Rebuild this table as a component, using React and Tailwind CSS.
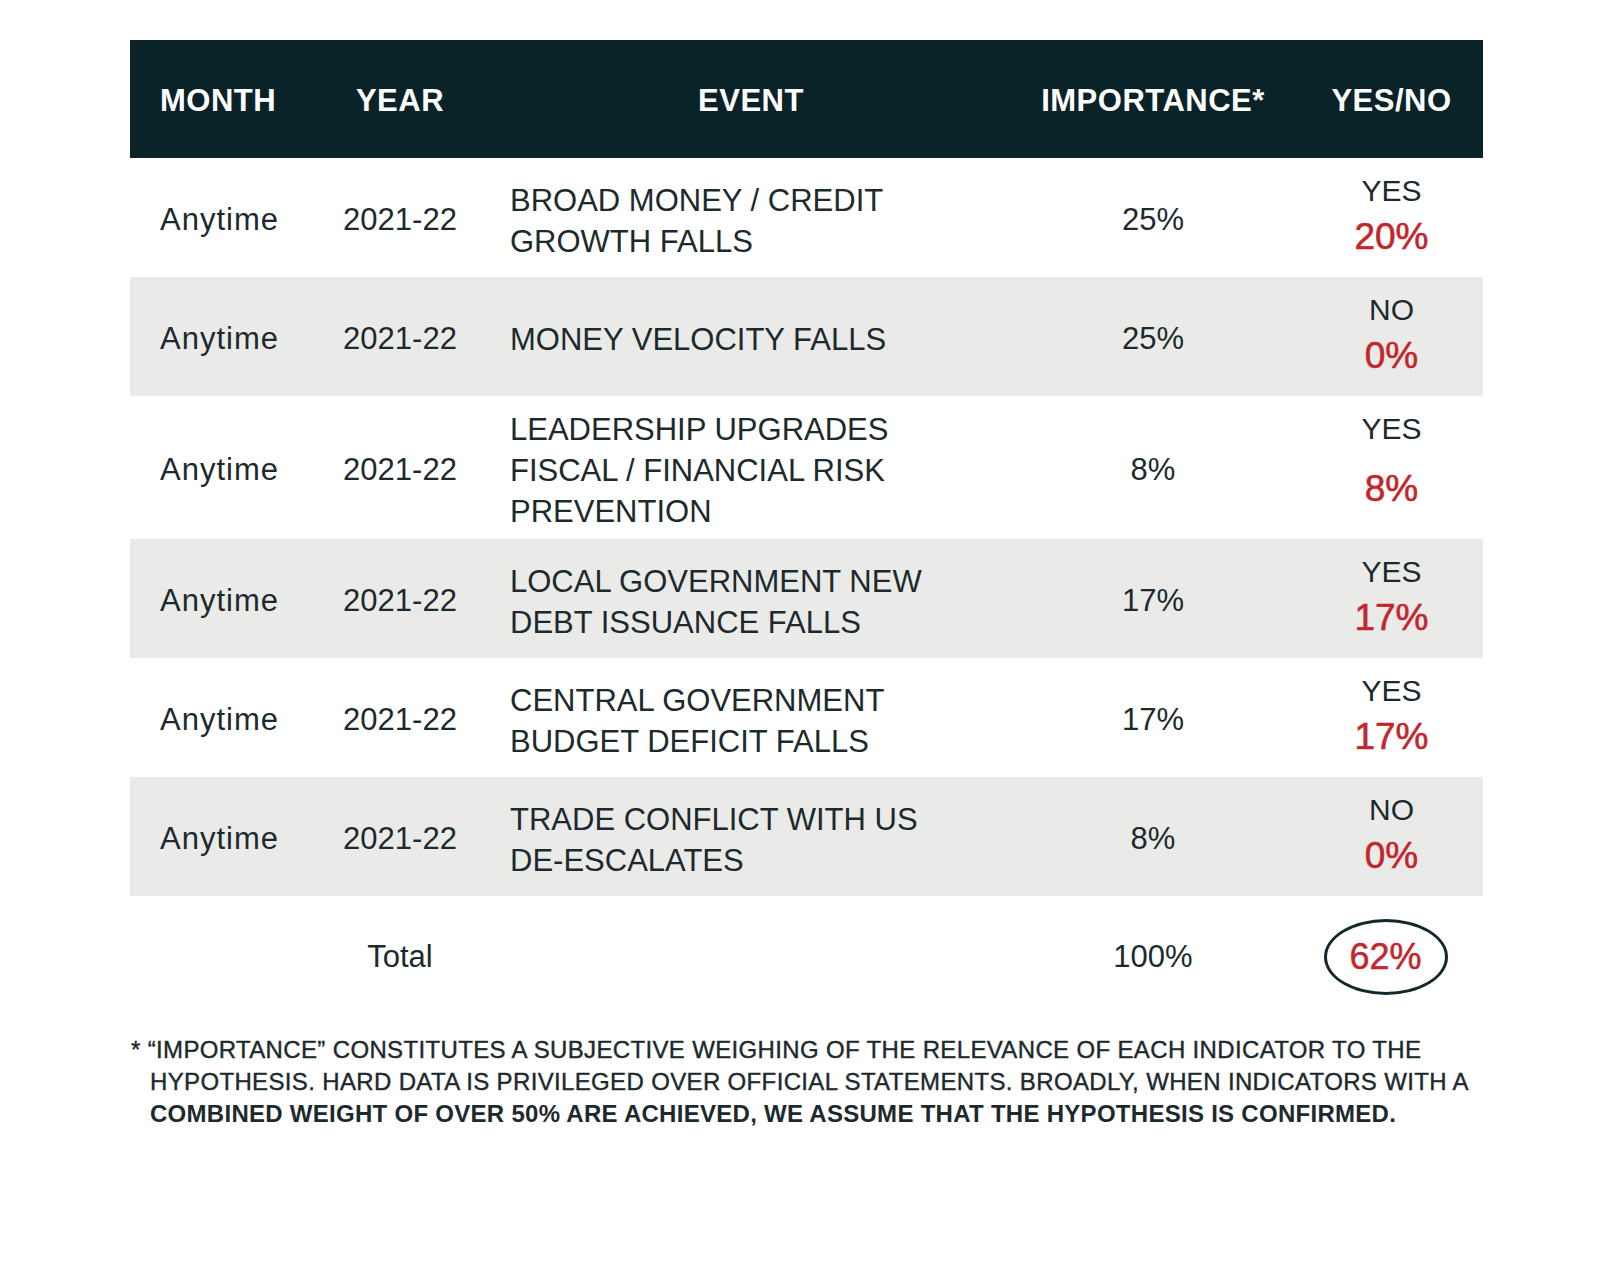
import React from "react";

const rows = [
  { event: ["BROAD MONEY / CREDIT", "GROWTH FALLS"], imp: "25%", yn: "YES", val: "20%" },
  { event: ["MONEY VELOCITY FALLS"], imp: "25%", yn: "NO", val: "0%" },
  { event: ["LEADERSHIP UPGRADES", "FISCAL / FINANCIAL RISK", "PREVENTION"], imp: "8%", yn: "YES", val: "8%", tall: true },
  { event: ["LOCAL GOVERNMENT NEW", "DEBT ISSUANCE FALLS"], imp: "17%", yn: "YES", val: "17%" },
  { event: ["CENTRAL GOVERNMENT", "BUDGET DEFICIT FALLS"], imp: "17%", yn: "YES", val: "17%" },
  { event: ["TRADE CONFLICT WITH US", "DE-ESCALATES"], imp: "8%", yn: "NO", val: "0%" },
];

export default function App() {
  return (
    <div
      className="w-[1600px] h-[1274px] bg-white text-[#1d2a2d] overflow-hidden"
      style={{ fontFamily: '"Liberation Sans", Arial, sans-serif' }}
    >
      <div className="ml-[130px] mt-[40px] w-[1353px]">
        {/* header */}
        <div className="grid grid-cols-[200px_140px_536px_294px_183px] h-[118px] items-center pt-[4px] bg-[#0a2329] text-white font-bold text-[31px] tracking-[0.5px]">
          <div className="pl-[30px]">MONTH</div>
          <div className="text-center">YEAR</div>
          <div className="pl-[40px] pr-[14px] text-center">EVENT</div>
          <div className="text-center">IMPORTANCE*</div>
          <div className="text-center">YES/NO</div>
        </div>
        {rows.map((r, i) => (
          <div
            key={i}
            className={`grid grid-cols-[200px_140px_536px_294px_183px] min-h-[119px] text-[31px] ${
              i % 2 === 1 ? "bg-[#eaebe9]" : "bg-white"
            }`}
          >
            <div className="pl-[30px] pt-[6px] flex items-center tracking-[1px]">Anytime</div>
            <div className="pt-[6px] flex items-center justify-center">2021-22</div>
            <div className="pl-[40px] pt-[13px] pb-[7px] flex flex-col justify-center leading-[41px]">
              {r.event.map((l, j) => (
                <div key={j}>{l}</div>
              ))}
            </div>
            <div className="pt-[6px] flex items-center justify-center">{r.imp}</div>
            <div className="flex flex-col items-center pt-[14px]">
              <div className="text-[30px] leading-[38px]">{r.yn}</div>
              <div
                className={`text-[37px] leading-[48px] text-[#c3262d] [-webkit-text-stroke:0.6px_#c3262d] ${
                  r.tall ? "mt-[17px]" : "mt-[3px]"
                }`}
              >
                {r.val}
              </div>
            </div>
          </div>
        ))}
        {/* total */}
        <div className="grid grid-cols-[200px_140px_536px_294px_183px] h-[122px] items-center text-[31px]">
          <div></div>
          <div className="text-center">Total</div>
          <div></div>
          <div className="text-center">100%</div>
          <div className="flex justify-center">
            <div className="w-[124px] h-[76px] rounded-[50%] border-[3.5px] border-[#13282c] flex items-center justify-center text-[36px] text-[#c3262d] [-webkit-text-stroke:0.5px_#c3262d] -translate-x-[6px]">
              62%
            </div>
          </div>
        </div>
        {/* footnote */}
        <div className="mt-[16px] ml-[1px] text-[24px] leading-[32px] text-[#1d2a2d] tracking-[0.35px] whitespace-nowrap">
          <div className="[-webkit-text-stroke:0.4px_#1d2a2d]">
            * “IMPORTANCE” CONSTITUTES A SUBJECTIVE WEIGHING OF THE RELEVANCE OF EACH INDICATOR TO THE
          </div>
          <div className="pl-[19px] [-webkit-text-stroke:0.4px_#1d2a2d]">
            HYPOTHESIS. HARD DATA IS PRIVILEGED OVER OFFICIAL STATEMENTS. BROADLY, WHEN INDICATORS WITH A
          </div>
          <div className="pl-[19px] font-bold tracking-[0.28px]">
            COMBINED WEIGHT OF OVER 50% ARE ACHIEVED, WE ASSUME THAT THE HYPOTHESIS IS CONFIRMED.
          </div>
        </div>
      </div>
    </div>
  );
}
